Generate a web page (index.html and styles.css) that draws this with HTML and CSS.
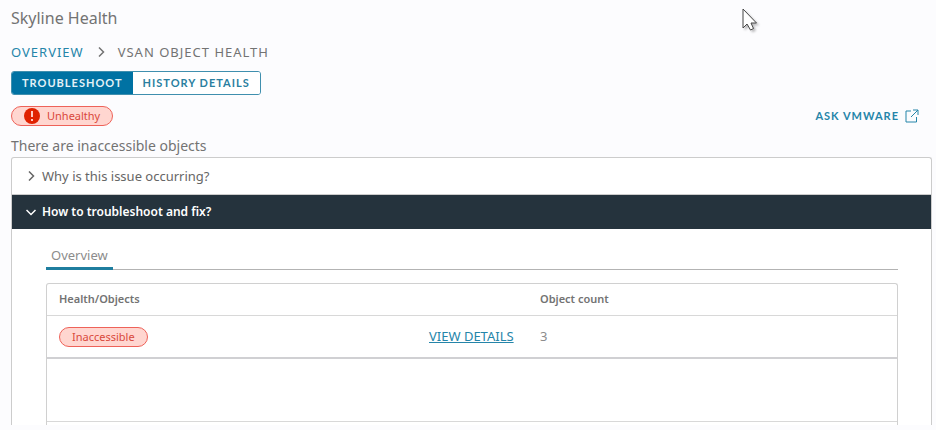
FILE: index.html
```
<!DOCTYPE html>
<html lang="en">
<head>
  <meta charset="UTF-8" />
  <meta name="viewport" content="width=device-width, initial-scale=1.0"/>
  <title>Skyline Health</title>
  <link rel="stylesheet" href="styles.css">
</head>
<body>

  <main class="page">
    <h1 class="title">Skyline Health</h1>

    <nav class="breadcrumb">
      <a href="#">OVERVIEW</a>
      <svg class="chevron" viewBox="0 0 10 10"><path d="M3 0.5 L7.5 5 L3 9.5"/></svg>
      <span>VSAN OBJECT HEALTH</span>
    </nav>

    <div class="btn-group">
      <button type="button" class="btn active">TROUBLESHOOT</button>
      <button type="button" class="btn">HISTORY DETAILS</button>
    </div>

    <div class="status-row">
      <span class="badge status">
        <svg class="alert" viewBox="0 0 16 16">
          <circle cx="8" cy="8" r="8"/>
          <path d="M8 3 V9"/>
          <path d="M8 11 V13"/>
        </svg>
        Unhealthy
      </span>
      <a class="ask" href="#">
        ASK VMWARE
        <svg class="pop-out" viewBox="0 0 14 14"><path d="M6 2 H1 V13 H11.5 V8 M8 1 H13 V6 M13 1 L6 8"/></svg>
      </a>
    </div>

    <p class="summary">There are inaccessible objects</p>

    <section class="accordion">
      <button type="button" class="accordion-header" aria-expanded="false">
        <svg class="chevron" viewBox="0 0 10 10"><path d="M3 0.5 L7.5 5 L3 9.5"/></svg>
        Why is this issue occurring?
      </button>
      <button type="button" class="accordion-header open" aria-expanded="true">
        <svg class="chevron" viewBox="0 0 10 10"><path d="M0.5 3 L5 7.5 L9.5 3"/></svg>
        How to troubleshoot and fix?
      </button>

      <div class="accordion-body">
        <div class="tabs">
          <button type="button" class="tab">Overview</button>
        </div>

        <div class="datagrid">
          <table>
            <thead>
              <tr>
                <th class="col-health">Health/Objects</th>
                <th class="col-link"></th>
                <th>Object count</th>
              </tr>
            </thead>
            <tbody>
              <tr>
                <td><span class="badge">Inaccessible</span></td>
                <td><a class="details" href="#">VIEW DETAILS</a></td>
                <td class="count">3</td>
              </tr>
            </tbody>
          </table>
          <div class="datagrid-footer"></div>
        </div>
      </div>
    </section>
  </main>

  <!-- Mouse pointer -->
  <svg class="cursor" viewBox="0 0 16 24"><path d="M1 1 V20 L5 16 L8.5 22 L11.5 20.5 L9 15 H14.5 Z"/></svg>

</body>
</html>
```
FILE: styles.css
```
* { margin: 0; padding: 0; box-sizing: border-box; }
body {
  background: #fcfcfe;
  color: #737373;
  font-family: "Noto Sans", "Open Sans", sans-serif;
  font-size: 13px;
  line-height: 20px;
}

button {
  font: inherit;
  color: inherit;
  background: none;
  border: none;
  cursor: pointer;
}

a {
  color: #2585a9;
  text-decoration: none;
}

svg {
  fill: none;
  stroke: currentColor;
  flex: none;
}

.page {
  padding: 8px 4px 6px 11px;
}

.title {
  font-size: 16px;
  font-weight: 400;
}

.breadcrumb {
  display: flex;
  align-items: center;
  gap: 12px;
  margin-top: 14px;
  letter-spacing: 1px;
}

.chevron {
  width: 10px;
  height: 10px;
  stroke-width: 1.5;
}

.btn-group {
  display: inline-flex;
  margin-top: 9px;
  border: 1px solid #3f8fae;
  border-radius: 3px;
  overflow: hidden;
  vertical-align: top;
}

.btn {
  padding: 0 10px;
  font-family: Lato, sans-serif;
  font-size: 11px;
  font-weight: 700;
  line-height: 22px;
  letter-spacing: 1px;
  color: #2a7f9f;
  background: #fff;
}

.btn.active {
  color: #e4f1f7;
  background: #0072a3;
}

.status-row {
  display: flex;
  align-items: center;
  justify-content: space-between;
  margin-top: 11px;
}

.badge {
  display: inline-flex;
  align-items: center;
  padding: 0 12px;
  font-size: 11px;
  line-height: 18px;
  color: #d9483b;
  background: #ffd6d0;
  border: 1px solid #ee6259;
  border-radius: 10px;
  vertical-align: middle;
}

.status {
  gap: 7px;
}

.alert {
  width: 16px;
  height: 16px;
  stroke: #ffc9c2;
  stroke-width: 2;
}

.alert circle {
  fill: #e02200;
  stroke: none;
}

.ask {
  display: flex;
  align-items: center;
  gap: 6px;
  padding-right: 13px;
  font-family: Lato, sans-serif;
  font-size: 11px;
  font-weight: 700;
  letter-spacing: 1px;
}

.pop-out {
  width: 14px;
  height: 14px;
}

.summary {
  margin-top: 10px;
  font-size: 14px;
}

.accordion {
  margin-top: 1px;
  background: #fff;
  border: 1px solid #ccc;
  border-bottom: none;
  border-radius: 3px 3px 0 0;
}

.accordion-header {
  display: flex;
  align-items: center;
  gap: 6px;
  width: 100%;
  padding: 8px 14px;
  color: #666;
  text-align: left;
}

.accordion-header.open {
  padding: 7px 14px;
  font-size: 12px;
  font-weight: 600;
  color: #fff;
  background: #25333d;
  border-top: 1px solid #ccc;
}

.accordion-body {
  padding: 16px 33px 0 34px;
}

.tabs {
  display: flex;
  box-shadow: inset 0 -1px #b3b3b3;
}

.tab {
  padding: 0 5px 2px;
  border-bottom: 3px solid #1f7e9f;
  color: #8c8c8c;
}

.datagrid {
  margin-top: 13px;
  border: 1px solid #d0d0d0;
  border-bottom: none;
  border-radius: 3px 3px 0 0;
}

table {
  width: 100%;
  table-layout: fixed;
  border-collapse: collapse;
}

th {
  height: 31px;
  padding: 0 12px;
  font-size: 11px;
  font-weight: 600;
  text-align: left;
  border-bottom: 1px solid #d8d8d8;
}

td {
  height: 43px;
  padding: 0 12px;
  border-bottom: 2px solid #d0d0d3;
}

.count {
  color: #8c8c8c;
}

.col-health {
  width: 370px;
}

.col-link {
  width: 111px;
}

.details {
  text-decoration: underline;
}

.datagrid-footer {
  height: 4px;
  margin-top: 62px;
  border-top: 1px solid #d8d8d8;
}

.cursor {
  position: absolute;
  top: 8px;
  left: 742px;
  width: 16px;
  height: 24px;
  fill: #fff;
  stroke: #444;
  filter: drop-shadow(2px 2px 1px rgba(0,0,0,0.25));
}
```
